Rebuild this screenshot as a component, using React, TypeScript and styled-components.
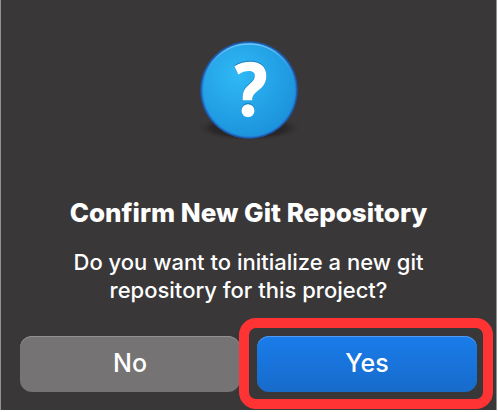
import React from "react";
import styled, { createGlobalStyle } from "styled-components";

const GlobalStyle = createGlobalStyle`
  * { box-sizing: border-box; }
  body { margin: 0; background: #ffffff; overflow: hidden; }
`;

const Dialog = styled.main`
  display: flex;
  flex-direction: column;
  align-items: center;
  margin-right: 1px;
  padding: 38px 19px 18px;
  border: solid #929292;
  border-width: 0 1px;
  background: #3a3738;
  color: #ffffff;
  font-family: Inter, "Liberation Sans", sans-serif;
  text-align: center;
`;

const QuestionIcon = styled.svg`
  display: block;
  width: 112px;
  height: 108px;
`;

const Title = styled.h1`
  margin: 51px 0 0;
  font-size: 26px;
  line-height: 32px;
  font-weight: 800;
`;

const Message = styled.p`
  max-width: 380px;
  margin: 19px 0 0;
  font-size: 22px;
  line-height: 28px;
  font-weight: 500;
`;

const Actions = styled.div`
  display: grid;
  grid-template-columns: 1fr 1fr;
  gap: 17px;
  align-self: stretch;
  margin-top: 32px;
`;

const ActionSlot = styled.div`
  position: relative;
  display: grid;
`;

const Button = styled.button<{ $primary?: boolean }>`
  height: 56px;
  padding: 0 0 2px;
  border: 0;
  border-radius: 12px;
  background: ${(p) => (p.$primary ? "linear-gradient(#1a7ceb, #176bca)" : "#757374")};
  box-shadow: inset 0 1px 0 ${(p) => (p.$primary ? "#4f9bf0" : "#929091")};
  color: #ffffff;
  font: 500 25px/30px Inter, "Liberation Sans", sans-serif;
`;

const Highlight = styled.span`
  position: absolute;
  inset: -18px -16px -17px -18px;
  border: 10px solid #ff3334;
  border-radius: 17px;
  pointer-events: none;
`;

const HOOK =
  "M41.5 28.2C46 25.2 52 23.8 57.5 23.8C67.8 23.8 73.3 29.4 73.3 37.5C73.3 44.2 70.6 48.2 66 51.8C61 55.8 59.2 57.8 59.2 62.3H49.8C49.3 55.2 50.6 51.2 55.4 47.2C59.8 43.4 61.8 41.2 61.8 37.8C61.8 34.6 59.6 33.1 56 33.1C52.4 33.1 48.8 34.2 45.4 36.6Z";

export default function App() {
  return (
    <>
      <GlobalStyle />
      <Dialog role="alertdialog" aria-labelledby="title" aria-describedby="message">
        <QuestionIcon viewBox="0 0 112 108" aria-hidden="true">
          <defs>
            <radialGradient id="face" cx="0.38" cy="0.34" r="0.7">
              <stop offset="0" stopColor="#30b8f5" />
              <stop offset="1" stopColor="#1b93dc" />
            </radialGradient>
            <linearGradient id="shine" x1="0" y1="0" x2="0" y2="1">
              <stop offset="0" stopColor="#72c6f6" />
              <stop offset="0.4" stopColor="#2b8be0" stopOpacity="0.4" />
              <stop offset="1" stopColor="#2b8be0" stopOpacity="0.3" />
            </linearGradient>
            <radialGradient id="shadow">
              <stop offset="0" stopColor="#1a1919" />
              <stop offset="0.7" stopColor="#272525" stopOpacity="0.85" />
              <stop offset="1" stopColor="#3a3738" stopOpacity="0" />
            </radialGradient>
          </defs>
          <ellipse cx="56" cy="90" rx="54" ry="13" fill="url(#shadow)" />
          <circle cx="56" cy="52" r="48.8" fill="#1c58a8" />
          <circle cx="56" cy="52" r="47.4" fill="#1f7dd2" />
          <circle cx="56" cy="52" r="46.2" fill="url(#face)" />
          <circle cx="56" cy="52" r="46" fill="none" stroke="url(#shine)" strokeWidth="1.3" />
          <g transform="translate(0 -1)" fill="#167fbe">
            <path d={HOOK} />
            <circle cx="55" cy="72.7" r="6.6" />
          </g>
          <path d={HOOK} fill="#fff" />
          <circle cx="55" cy="72.7" r="6.5" fill="#fff" />
        </QuestionIcon>
        <Title id="title">Confirm New Git Repository</Title>
        <Message id="message">Do you want to initialize a new git repository for this project?</Message>
        <Actions>
          <ActionSlot>
            <Button type="button">No</Button>
          </ActionSlot>
          <ActionSlot>
            <Button type="button" $primary>Yes</Button>
            <Highlight />
          </ActionSlot>
        </Actions>
      </Dialog>
    </>
  );
}
